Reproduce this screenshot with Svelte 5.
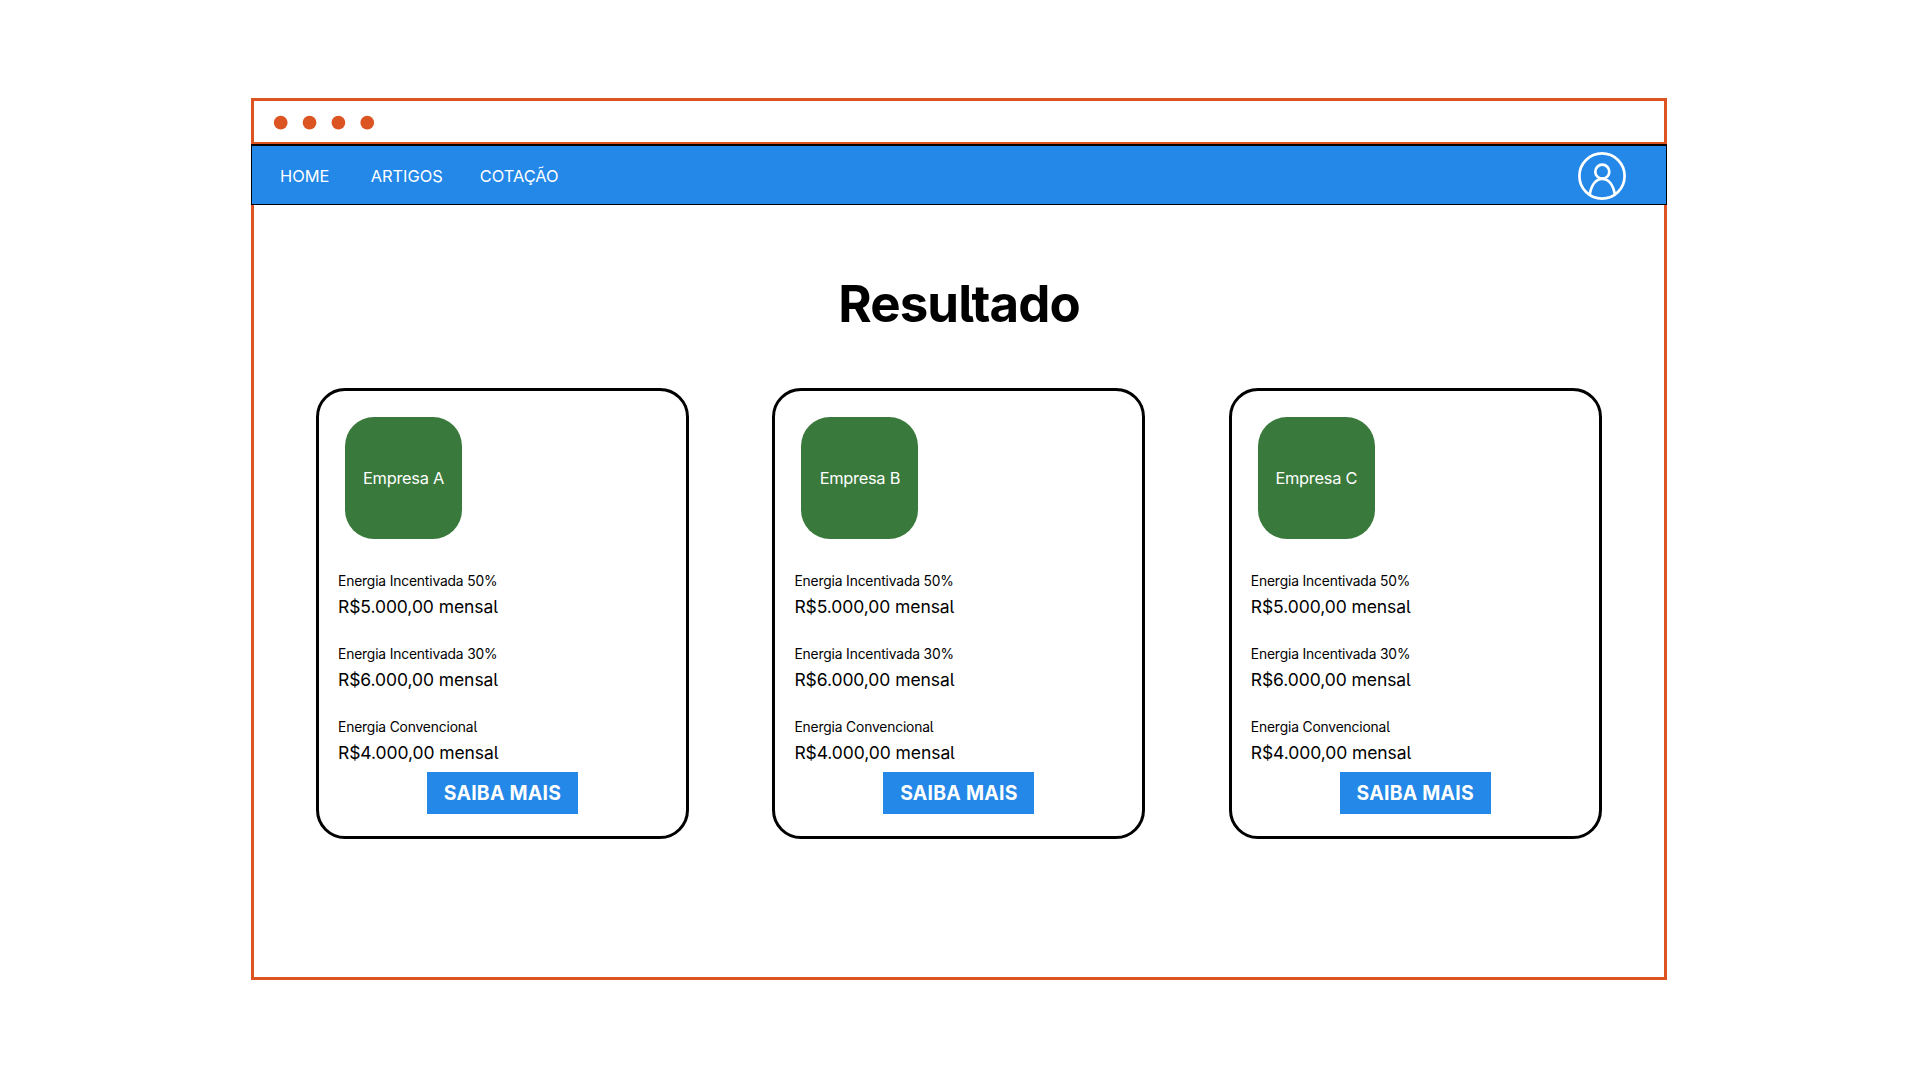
<script>
  const links = ['HOME', 'ARTIGOS', 'COTAÇÃO'];
  const companies = ['Empresa A', 'Empresa B', 'Empresa C'];
  const plans = [
    { name: 'Energia Incentivada 50%', price: 'R$5.000,00 mensal' },
    { name: 'Energia Incentivada 30%', price: 'R$6.000,00 mensal' },
    { name: 'Energia Convencional', price: 'R$4.000,00 mensal' }
  ];
</script>

<div class="page">
  <div class="window">
    <svg class="titlebar" viewBox="0 0 1410 41" fill="#db5421">
      {#each [0, 1, 2, 3] as dot (dot)}
        <circle cx={26.7 + dot * 28.85} cy="21.7" r="6.85" />
      {/each}
    </svg>

    <nav class="nav">
      <div class="links">
        {#each links as link (link)}
          <a class="link">{link}</a>
        {/each}
      </div>
      <svg class="avatar" viewBox="0 0 48 48" fill="none" stroke="#fff" stroke-width="2.7">
        <circle cx="24" cy="24" r="22.6" />
        <circle cx="24.3" cy="19.7" r="7" />
        <path d="M11.6 43.2C13.2 33.5 17.8 26.9 24.3 26.9S35.4 33.5 37 43.2" />
      </svg>
    </nav>

    <main class="content">
      <h1>Resultado</h1>
      <div class="cards">
        {#each companies as company (company)}
          <article class="card">
            <div class="logo">{company}</div>
            <div class="plans">
              {#each plans as plan (plan.name)}
                <div class="plan">
                  <div class="name">{plan.name}</div>
                  <div class="price">{plan.price}</div>
                </div>
              {/each}
            </div>
            <button class="more">SAIBA MAIS</button>
          </article>
        {/each}
      </div>
    </main>
  </div>
</div>

<style>
  :global(body) {
    background: #fff;
  }
  .page {
    box-sizing: border-box;
    width: 1920px;
    height: 1080px;
    padding: 98px 253px 100px 251px;
    overflow: hidden;
    color: #000;
    font-family: Inter, "Liberation Sans", sans-serif;
    font-feature-settings: "cv05";
  }
  .window {
    box-sizing: border-box;
    width: 1416px;
    height: 882px;
    border: 3px solid #db5421;
    display: flex;
    flex-direction: column;
  }
  .titlebar {
    width: 1410px;
    height: 41px;
    flex: none;
    border-bottom: 2px solid #db5421;
  }
  .nav {
    box-sizing: border-box;
    height: 61px;
    flex: none;
    margin: 0 -3px;
    padding: 2px 40px 0 28px;
    border: 1px solid #000;
    border-top-width: 2px;
    background: #2388e7;
    display: flex;
    align-items: center;
    justify-content: space-between;
  }
  .links {
    display: grid;
    grid-template-columns: 90.7px 109px auto;
  }
  .link {
    color: #fff;
    font-size: 16.4px;
    line-height: 24px;
  }
  .avatar {
    width: 48px;
    height: 48px;
  }
  .content {
    flex: 1;
  }
  h1 {
    margin: 63px 0 0;
    text-align: center;
    font-size: 51px;
    line-height: 72px;
    font-weight: 650;
    letter-spacing: -0.9px;
  }
  .cards {
    margin-top: 48px;
    padding-left: 62px;
    display: grid;
    grid-template-columns: repeat(3, 373px);
    gap: 83.4px;
  }
  .card {
    box-sizing: border-box;
    height: 451px;
    padding: 26px 0 0 19px;
    border: 3px solid #000;
    border-radius: 29px;
    display: flex;
    flex-direction: column;
  }
  .logo {
    width: 117px;
    height: 122px;
    margin-left: 7px;
    border-radius: 29px;
    background: #39793b;
    color: #fff;
    font-size: 16.4px;
    letter-spacing: -0.28px;
    display: flex;
    align-items: center;
    justify-content: center;
  }
  .plans {
    margin-top: 31px;
    display: flex;
    flex-direction: column;
    gap: 23px;
  }
  .name {
    font-size: 13.8px;
    line-height: 23px;
    letter-spacing: -0.15px;
  }
  .price {
    font-size: 17.5px;
    line-height: 27px;
    letter-spacing: -0.08px;
  }
  .more {
    width: 151px;
    height: 42px;
    margin: 6px 0 0 89px;
    padding: 0;
    border: 0;
    background: #2388e7;
    color: #fff;
    font: 650 19.4px/42px Inter, "Liberation Sans", sans-serif;
    letter-spacing: 0.25px;
  }
</style>
